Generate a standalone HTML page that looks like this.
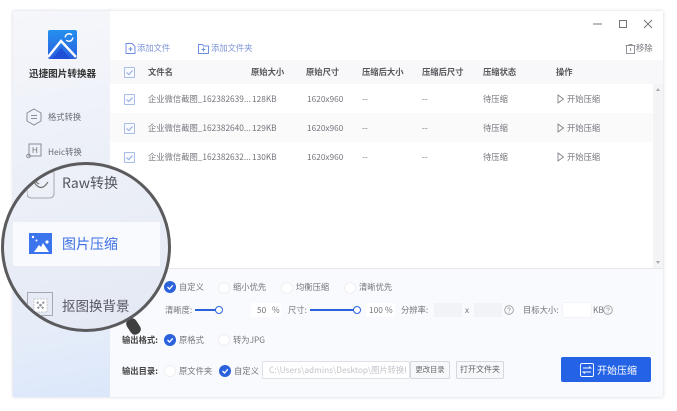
<!DOCTYPE html>
<html><head><meta charset="utf-8">
<style>
html,body{margin:0;padding:0;width:677px;height:411px;overflow:hidden;background:#fff}
body{font-family:"Noto Sans CJK SC","Liberation Sans",sans-serif;position:relative;color:#666}
#w{position:absolute;left:0;top:0;width:677px;height:411px;filter:blur(.3px)}
.a{position:absolute;white-space:nowrap}
.t{position:absolute;white-space:nowrap;font-size:8.3px;line-height:12px;color:#74757c}
.h{font-weight:700;color:#55565c}
.b{font-weight:700;color:#444}
.cb{position:absolute;width:9px;height:9px;border:1px solid #a9bde8;background:#f8faff;border-radius:1px}
.cb svg{position:absolute;left:0;top:0}
.r{position:absolute;width:10px;height:10px;border-radius:50%;background:#fff;border:1px solid #eeeff3}
.c{position:absolute;width:12px;height:12px;border-radius:50%;background:#2b62dc}
.c svg{position:absolute;left:0;top:0}
.in{position:absolute;background:#f2f3f6;border-radius:2px;height:14px}
.btn{position:absolute;border:1px solid #d6d8de;border-radius:2px;background:#f7f8fb;height:16px;line-height:16px;font-size:7.5px;text-align:center;color:#666}
</style></head><body><div id="w">
<div class="a" style="left:13px;top:11px;width:650px;height:386px;background:#fff;box-shadow:0 0 3px rgba(120,130,160,.35)"></div>
<div class="a" style="left:13px;top:11px;width:97px;height:386px;background:linear-gradient(170deg,#f6f7fb 0%,#eaeef7 45%,#e6edf9 80%,#dbe7fa 100%)"></div>

<svg class="a" style="left:47px;top:30px" width="30" height="30" viewBox="0 0 30 30"><defs><linearGradient id="g" x1="0" y1="0" x2="0" y2="1"><stop offset="0" stop-color="#2490ee"/><stop offset="1" stop-color="#2a5fe0"/></linearGradient></defs><rect x="1" y="0" width="29" height="29" rx="2" fill="url(#g)"/><path d="M1 27 L14 11 L29 27" fill="none" stroke="#fff" stroke-width="2.4"/><path d="M5 29 L14 18 L24 29Z" fill="#1f4fd8"/><circle cx="22" cy="7.500" r="3.800" fill="none" stroke="#fff" stroke-width="1.500" stroke-dasharray="9 3"/></svg>
<div class="a b" style="left:29px;top:66px;font-size:9.600px;line-height:14px;color:#333;width:70px">迅捷图片转换器</div>

<svg class="a" style="left:26px;top:108px" width="16" height="18" viewBox="0 0 16 18"><path d="M8 1 L15 5 V13 L8 17 L1 13 V5Z" fill="none" stroke="#8a8d96"/><path d="M5 7.500H11M5 10.500H11" stroke="#8a8d96"/></svg>
<div class="t" style="left:48px;top:111px;color:#6a6c74">格式转换</div>
<svg class="a" style="left:26px;top:143px" width="16" height="16" viewBox="0 0 16 16"><rect x="3" y="1" width="12" height="12" fill="none" stroke="#8a8d96"/><text x="6" y="10" font-size="8" fill="#777" font-family="Liberation Sans">H</text><circle cx="2.500" cy="13" r="1.800" fill="none" stroke="#8a8d96"/></svg>
<div class="t" style="left:48px;top:146px;color:#6a6c74">Heic转换</div>

<!-- Main -->
<svg class="a" style="left:590px;top:17px" width="70" height="14" viewBox="0 0 70 14"><path d="M3 7H12" stroke="#777"/><rect x="29.500" y="3.500" width="7" height="7" fill="none" stroke="#777"/><path d="M54 3L62 11M62 3L54 11" stroke="#777"/></svg>

<svg class="a" style="left:125px;top:43px" width="11" height="11" viewBox="0 0 11 11"><path d="M1 .5H7L10 3.500V10.500H1Z" fill="none" stroke="#6f8fe2"/><path d="M3.500 6H7.500M5.500 4V8" stroke="#6f8fe2"/></svg>
<div class="t" style="left:137px;top:42px;color:#7c95d8">添加文件</div>
<svg class="a" style="left:198px;top:43px" width="11" height="11" viewBox="0 0 11 11"><path d="M.5 1.500H4.500L5.500 3H10.500V10.500H.5Z" fill="none" stroke="#6f8fe2"/><path d="M3.500 6.500H7.500M5.500 4.500V8.500" stroke="#6f8fe2"/></svg>
<div class="t" style="left:211px;top:42px;color:#7c95d8">添加文件夹</div>
<svg class="a" style="left:625px;top:44px" width="11" height="10" viewBox="0 0 11 10"><path d="M.5 1.500H10.500M1.500 1.500V9.500H9.500V1.500M4 1.500V.5H7V1.500M5.500 4V7" fill="none" stroke="#77787f" stroke-width=".8"/></svg>
<div class="t" style="left:636px;top:42px">移除</div>

<div class="a" style="left:110px;top:60px;width:553px;height:24px;background:#f8f8fa"></div>
<div class="a" style="left:110px;top:113px;width:543px;height:29px;background:#fafafb"></div>
<div class="a" style="left:653px;top:84px;width:10px;height:184px;background:#f4f4f6"></div>
<div class="a" style="left:656px;top:88px;border:2px solid transparent;border-bottom:3px solid #aaa;border-top:0"></div>
<div class="a" style="left:656px;top:261px;border:2px solid transparent;border-top:3px solid #aaa;border-bottom:0"></div>

<div class="cb" style="left:124px;top:67px"><svg width="9" height="9"><path d="M1.500 4.500L3.800 6.500L7.500 2.500" fill="none" stroke="#8fa8e4"/></svg></div>
<div class="t h" style="left:148px;top:66px">文件名</div>
<div class="t h" style="left:251px;top:66px">原始大小</div>
<div class="t h" style="left:306px;top:66px">原始尺寸</div>
<div class="t h" style="left:362px;top:66px">压缩后大小</div>
<div class="t h" style="left:422px;top:66px">压缩后尺寸</div>
<div class="t h" style="left:483px;top:66px">压缩状态</div>
<div class="t h" style="left:556px;top:66px">操作</div>

<div class="cb" style="left:124px;top:94px"><svg width="9" height="9"><path d="M1.500 4.500L3.800 6.500L7.500 2.500" fill="none" stroke="#8fa8e4"/></svg></div>
<div class="t" style="left:148px;top:93px">企业微信截图_162382639...</div>
<div class="t" style="left:252px;top:93px">128KB</div>
<div class="t" style="left:307px;top:93px">1620x960</div>
<div class="t" style="left:362px;top:93px">--</div>
<div class="t" style="left:422px;top:93px">--</div>
<div class="t" style="left:483px;top:93px">待压缩</div>
<svg class="a" style="left:557px;top:94px" width="8" height="10" viewBox="0 0 8 10"><path d="M1 1L6.500 5L1 9Z" fill="none" stroke="#77787f" stroke-width=".8"/></svg>
<div class="t" style="left:567px;top:93px">开始压缩</div>

<div class="cb" style="left:124px;top:123px"><svg width="9" height="9"><path d="M1.500 4.500L3.800 6.500L7.500 2.500" fill="none" stroke="#8fa8e4"/></svg></div>
<div class="t" style="left:148px;top:122px">企业微信截图_162382640...</div>
<div class="t" style="left:252px;top:122px">129KB</div>
<div class="t" style="left:307px;top:122px">1620x960</div>
<div class="t" style="left:362px;top:122px">--</div>
<div class="t" style="left:422px;top:122px">--</div>
<div class="t" style="left:483px;top:122px">待压缩</div>
<svg class="a" style="left:557px;top:123px" width="8" height="10" viewBox="0 0 8 10"><path d="M1 1L6.500 5L1 9Z" fill="none" stroke="#77787f" stroke-width=".8"/></svg>
<div class="t" style="left:567px;top:122px">开始压缩</div>

<div class="cb" style="left:124px;top:152px"><svg width="9" height="9"><path d="M1.500 4.500L3.800 6.500L7.500 2.500" fill="none" stroke="#8fa8e4"/></svg></div>
<div class="t" style="left:148px;top:151px">企业微信截图_162382632...</div>
<div class="t" style="left:252px;top:151px">130KB</div>
<div class="t" style="left:307px;top:151px">1620x960</div>
<div class="t" style="left:362px;top:151px">--</div>
<div class="t" style="left:422px;top:151px">--</div>
<div class="t" style="left:483px;top:151px">待压缩</div>
<svg class="a" style="left:557px;top:152px" width="8" height="10" viewBox="0 0 8 10"><path d="M1 1L6.500 5L1 9Z" fill="none" stroke="#77787f" stroke-width=".8"/></svg>
<div class="t" style="left:567px;top:151px">开始压缩</div>

<!-- Bottom panel -->
<div class="a" style="left:110px;top:268px;width:553px;height:129px;background:#f9fafd;border-top:1px solid #e6e7eb;box-sizing:border-box"></div>

<div class="c" style="left:164px;top:281px"><svg width="12" height="12"><path d="M3.500 6L5.500 8L8.800 4.300" fill="none" stroke="#fff" stroke-width="1.300"/></svg></div>
<div class="t" style="left:179px;top:281px">自定义</div>
<div class="r" style="left:218px;top:282px"></div><div class="t" style="left:233px;top:281px">缩小优先</div>
<div class="r" style="left:281px;top:282px"></div><div class="t" style="left:296px;top:281px">均衡压缩</div>
<div class="r" style="left:344px;top:282px"></div><div class="t" style="left:359px;top:281px">清晰优先</div>

<div class="t" style="left:165px;top:304px">清晰度:</div>
<div class="a" style="left:195px;top:309px;width:24px;height:2px;background:#2b62dc"></div>
<div class="a" style="left:215px;top:306px;width:6px;height:6px;border:1.500px solid #2b62dc;border-radius:50%;background:#fff"></div>
<div class="a" style="left:251px;top:303px;width:30px;height:14px;background:#fff;border-radius:2px"></div>
<div class="t" style="left:257px;top:304px">50</div><div class="t" style="left:272px;top:304px">%</div>
<div class="t" style="left:288px;top:304px">尺寸:</div>
<div class="a" style="left:310px;top:309px;width:48px;height:2px;background:#2b62dc"></div>
<div class="a" style="left:353px;top:306px;width:6px;height:6px;border:1.500px solid #2b62dc;border-radius:50%;background:#fff"></div>
<div class="a" style="left:366px;top:303px;width:29px;height:14px;background:#fff;border-radius:2px"></div>
<div class="t" style="left:369px;top:304px">100</div><div class="t" style="left:385px;top:304px">%</div>
<div class="t" style="left:401px;top:304px">分辨率:</div>
<div class="in" style="left:434px;top:303px;width:28px"></div>
<div class="t" style="left:465px;top:304px">x</div>
<div class="in" style="left:474px;top:303px;width:28px"></div>
<svg class="a" style="left:504px;top:305px" width="10" height="10"><circle cx="5" cy="5" r="4.300" fill="none" stroke="#999" stroke-width=".8"/><path d="M3.700 4C3.700 2.500 6.300 2.500 6.300 4C6.300 5 5 5 5 6.200M5 7V7.800" fill="none" stroke="#999" stroke-width=".7"/></svg>
<div class="t" style="left:523px;top:304px">目标大小:</div>
<div class="a" style="left:563px;top:303px;width:28px;height:14px;background:#fff;border-radius:2px;box-shadow:0 0 1px #ccc"></div>
<div class="t" style="left:593px;top:304px">KB</div>
<svg class="a" style="left:603px;top:305px" width="10" height="10"><circle cx="5" cy="5" r="4.300" fill="none" stroke="#999" stroke-width=".8"/><path d="M3.700 4C3.700 2.500 6.300 2.500 6.300 4C6.300 5 5 5 5 6.200M5 7V7.800" fill="none" stroke="#999" stroke-width=".7"/></svg>

<div class="t b" style="left:122px;top:334px">输出格式:</div>
<div class="c" style="left:164px;top:334px"><svg width="12" height="12"><path d="M3.500 6L5.500 8L8.800 4.300" fill="none" stroke="#fff" stroke-width="1.300"/></svg></div>
<div class="t" style="left:179px;top:334px">原格式</div>
<div class="r" style="left:218px;top:334px"></div><div class="t" style="left:233px;top:334px">转为JPG</div>

<div class="t b" style="left:122px;top:365px">输出目录:</div>
<div class="r" style="left:164px;top:365px"></div><div class="t" style="left:179px;top:365px">原文件夹</div>
<div class="c" style="left:219px;top:365px"><svg width="12" height="12"><path d="M3.500 6L5.500 8L8.800 4.300" fill="none" stroke="#fff" stroke-width="1.300"/></svg></div>
<div class="t" style="left:234px;top:365px">自定义</div>
<div class="a" style="left:262px;top:361px;width:148px;height:18px;background:#fff;border:1px solid #e0e1e6;border-radius:2px;box-sizing:border-box;font-size:8.3px;line-height:16px;padding-left:6px;color:#c2c3c9;overflow:hidden">C:\Users\admins\Desktop\图片转换I</div>
<div class="btn" style="left:410px;top:361px;width:38px;font-size:7.3px">更改目录</div>
<div class="btn" style="left:456px;top:361px;width:46px;font-size:8px">打开文件夹</div>
<div class="a" style="left:561px;top:357px;width:90px;height:25px;background:#2563e6;border-radius:2px;color:#fff;font-size:10px;line-height:25px;padding-left:36px;box-sizing:border-box">开始压缩</div>
<svg class="a" style="left:580px;top:363px" width="14" height="14" viewBox="0 0 14 14"><rect x=".5" y=".5" width="13" height="13" rx="1.500" fill="none" stroke="#fff" stroke-width=".9"/><path d="M3 5H11L9 3.500M11 9H3L5 10.500" fill="none" stroke="#fff" stroke-width=".9"/></svg>

<!-- Magnifier -->
<div class="a" style="left:128px;top:318px;width:11px;height:17px;background:#3f3f40;border-radius:5px;transform:rotate(-33deg)"></div>
<div class="a" style="left:1px;top:162px;width:170px;height:170px;border-radius:50%;border:3px solid #5b5b5d;box-sizing:border-box;overflow:hidden;background:linear-gradient(165deg,#eef1f8,#e3e8f4)">
  <div class="a" style="left:9px;top:57px;width:147px;height:44px;background:#f9fafe"></div>
  <div class="a" style="left:58px;top:8px;font-size:14px;line-height:20px;color:#55565e">Raw转换</div>
  <svg class="a" style="left:23px;top:7px" width="28" height="27" viewBox="0 0 28 27"><path d="M0 0 V21 Q0 26 5 26 H22 Q27 26 27 21 V0" fill="none" stroke="#a6a8b0"/><path d="M7 10 Q14 21 21 10 M3 6 L12 12" fill="none" stroke="#777" stroke-width="1.200"/></svg>
  <svg class="a" style="left:25px;top:68px" width="23" height="21" viewBox="0 0 23 21"><rect width="23" height="21" fill="#3c74ee"/><path d="M5 19 L10 12 L12 14 L14 10 L20 19Z" fill="#fff"/><circle cx="4" cy="4" r="1.200" fill="#fff"/><circle cx="7.500" cy="7.500" r="1" fill="#fff"/><circle cx="18" cy="9" r="1.600" fill="#fff"/></svg>
  <div class="a" style="left:58px;top:69px;font-size:14px;line-height:20px;color:#3c6fe4">图片压缩</div>
  <svg class="a" style="left:23px;top:127px" width="26" height="24" viewBox="0 0 26 24"><rect x=".5" y=".5" width="25" height="23" fill="none" stroke="#a6a8b0"/><rect x="7" y="7" width="13" height="13" fill="#fff" stroke="#c6c8cf" stroke-dasharray="2 1"/><path d="M10 10L17 17M17 10L10 17" stroke="#8f929b" stroke-width="2" stroke-dasharray="2 1.500"/></svg>
  <div class="a" style="left:58px;top:130px;font-size:13.500px;line-height:20px;color:#55565e">抠图换背景</div>
</div>
</div></body></html>
